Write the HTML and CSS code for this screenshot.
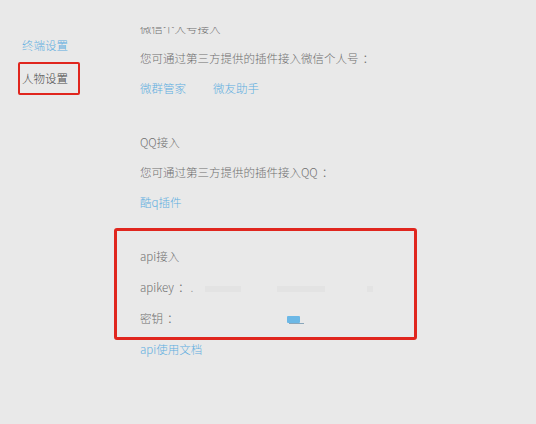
FILE: index.html
```html
<!DOCTYPE html>
<html lang="zh-CN">
<head>
<meta charset="utf-8">
<title>人物设置</title>
<link rel="stylesheet" href="styles.css">
</head>
<body>
<div class="page">
  <nav class="nav">
    <a class="nav-link">终端设置</a>
    <div class="nav-item active">人物设置</div>
  </nav>
  <main class="main">
    <div class="content">
      <section class="section">
        <div class="row title">微信个人号接入</div>
        <div class="row">您可通过第三方提供的插件接入微信个人号<span class="colon">：</span></div>
        <div class="row links"><a class="link">微群管家</a><a class="link">微友助手</a></div>
      </section>
      <section class="section">
        <div class="row title">QQ接入</div>
        <div class="row">您可通过第三方提供的插件接入QQ<span class="colon">：</span></div>
        <div class="row links"><a class="link">酷q插件</a></div>
      </section>
      <section class="section api">
        <div class="highlight"></div>
        <div class="row tall title">api接入</div>
        <div class="row tall">apikey<span class="colon">：</span><span class="dot">.</span><span class="blur b1"></span><span class="blur b2"></span><span class="blur b3"></span></div>
        <div class="row tall">密钥<span class="colon">：</span><span class="secret"></span></div>
        <div class="row tall links"><a class="link">api使用文档</a></div>
      </section>
    </div>
  </main>
</div>
</body>
</html>
```
FILE: styles.css
```css
* { box-sizing: border-box; }
html, body {
  margin: 0;
  padding: 0;
  background: #e9e9e9;
}
body {
  font-family: "Noto Sans CJK SC", "Noto Sans", sans-serif;
  font-size: 11.5px;
  font-weight: 300;
  color: #707070;
  width: 536px;
  height: 424px;
  overflow: hidden;
}
.page {
  display: flex;
  align-items: flex-start;
}
.nav {
  width: 140px;
  flex: none;
  padding-top: 30px;
  padding-left: 18px;
  display: flex;
  flex-direction: column;
  align-items: flex-start;
}
.nav-link {
  display: block;
  height: 30px;
  line-height: 30px;
  padding-left: 4px;
  color: #5eaee0;
  margin-bottom: 2px;
}
.nav-item {
  height: 33px;
  line-height: 29px;
  width: 62px;
  padding-left: 2px;
  color: #4a4a4a;
}
.nav-item.active {
  border: 2px solid #e0261e;
  border-radius: 2px;
}
.main {
  flex: 1;
  margin-top: 27px;
  clip-path: inset(0 -300px -300px -300px);
}
.content {
  margin-top: -14px;
}
.section {
  position: relative;
  margin-bottom: 24px;
}
.row {
  height: 30px;
  line-height: 30px;
  white-space: nowrap;
}
.row.tall {
  height: 31px;
  line-height: 31px;
}
.colon {
  padding-left: 4px;
  margin-right: -4px;
}
.title {
  color: #707070;
}
.links .link {
  color: #5eaee0;
  margin-right: 27px;
}
.api .highlight {
  position: absolute;
  top: -13px;
  left: -26px;
  width: 303px;
  height: 112px;
  border: 3px solid #e0261e;
  border-radius: 3px;
  pointer-events: none;
}
.dot {
  color: #9a9a9a;
  margin-left: 5px;
}
.blur {
  display: inline-block;
  height: 6px;
  background: #e3e3e3;
  vertical-align: middle;
}
.b1 { width: 36px; margin-left: 12px; }
.b2 { width: 48px; margin-left: 36px; }
.b3 { width: 6px; margin-left: 42px; }
.secret {
  display: inline-block;
  position: relative;
  width: 13px;
  height: 7px;
  margin-left: 112px;
  background: #6cb8e6;
  vertical-align: middle;
  border-radius: 1px;
}
.secret::after {
  content: "";
  position: absolute;
  left: 2px;
  bottom: -1px;
  width: 15px;
  height: 1px;
  background: #8aa6ba;
}
```
